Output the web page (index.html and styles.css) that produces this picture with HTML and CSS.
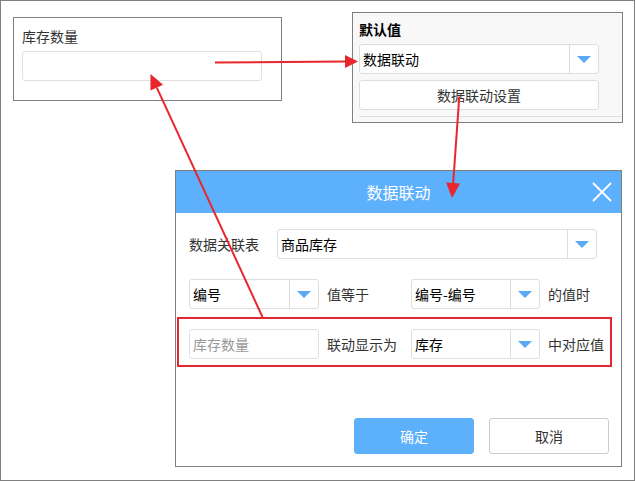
FILE: index.html
```html
<!DOCTYPE html>
<html lang="zh-CN">
<head>
<meta charset="utf-8">
<title>数据联动</title>
<link rel="stylesheet" href="styles.css">
</head>
<body>
<div class="frame">
  <div class="card card-field">
    <div class="field-label">库存数量</div>
    <div class="field-input"></div>
  </div>

  <div class="card card-default">
    <div class="default-title">默认值</div>
    <div class="select select-wide">
      <span class="select-text">数据联动</span>
      <span class="select-arrow"><i class="tri"></i></span>
    </div>
    <div class="btn-setting">数据联动设置</div>
    <div class="divider"></div>
  </div>

  <div class="dialog">
    <div class="dialog-header">
      <span class="dialog-title">数据联动</span>
      <svg class="close" width="20" height="20" viewBox="0 0 20 20">
        <path d="M1 1 L19 19 M19 1 L1 19" stroke="#fff" stroke-width="1.8" fill="none"/>
      </svg>
    </div>
    <div class="dialog-body">
      <div class="row">
        <span class="lbl lbl-table">数据关联表</span>
        <div class="select sel-table">
          <span class="select-text">商品库存</span>
          <span class="select-arrow"><i class="tri"></i></span>
        </div>
      </div>
      <div class="row">
        <div class="select sel-sm">
          <span class="select-text">编号</span>
          <span class="select-arrow"><i class="tri"></i></span>
        </div>
        <span class="lbl lbl-mid">值等于</span>
        <div class="select sel-mid">
          <span class="select-text">编号-编号</span>
          <span class="select-arrow"><i class="tri"></i></span>
        </div>
        <span class="lbl lbl-end">的值时</span>
      </div>
      <div class="row">
        <div class="input-sm">库存数量</div>
        <span class="lbl lbl-mid">联动显示为</span>
        <div class="select sel-mid">
          <span class="select-text">库存</span>
          <span class="select-arrow"><i class="tri"></i></span>
        </div>
        <span class="lbl lbl-end">中对应值</span>
      </div>
    </div>
    <div class="dialog-footer">
      <button class="btn btn-primary">确定</button>
      <button class="btn">取消</button>
    </div>
  </div>

  <svg class="annotations" width="636" height="481" viewBox="0 0 636 481">
    <g stroke="#e8262d" stroke-width="2" fill="none">
      <line x1="215" y1="62.5" x2="346" y2="61.6"/>
      <line x1="459.3" y1="96.5" x2="453.1" y2="184"/>
      <line x1="262.5" y1="317" x2="156.8" y2="87.6"/>
      <rect x="178" y="318" width="433" height="48"/>
    </g>
    <g fill="#e8262d">
      <polygon points="358,61.5 345,55.1 345,68.1"/>
      <polygon points="452,198 460.1,183.5 446.1,182.5"/>
      <polygon points="150.5,74 163.1,84.7 150.4,90.6"/>
    </g>
  </svg>
</div>
</body>
</html>
```

FILE: styles.css
```css
* {
  box-sizing: border-box;
  margin: 0;
  padding: 0;
}

body {
  font-family: "Noto Sans CJK SC", "Noto Sans", sans-serif;
  font-size: 14px;
  color: #333;
  background: #fff;
}

.frame {
  position: relative;
  width: 635px;
  height: 481px;
  border: 1px solid #808080;
  background: #fff;
}

.card {
  position: absolute;
  border: 1px solid #7f7f7f;
}

.card-field {
  left: 12px;
  top: 16px;
  width: 269px;
  height: 84px;
  padding: 8px 0 0 8px;
  background: #fff;
}

.field-label {
  line-height: 20px;
  color: #333;
}

.field-input {
  margin-top: 5px;
  width: 240px;
  height: 30px;
  border: 1px solid #e0e0e0;
  border-radius: 3px;
  background: #fff;
}

.card-default {
  left: 351px;
  top: 11px;
  width: 271px;
  height: 111px;
  padding: 6px 0 0 6px;
  background: #f8f8f8;
}

.default-title {
  font-weight: bold;
  color: #000;
  line-height: 20px;
}

.select {
  display: flex;
  height: 30px;
  border: 1px solid #ddd;
  border-radius: 3px;
  background: #fff;
}

.select-text {
  flex: 1;
  min-width: 0;
  padding-left: 3px;
  line-height: 28px;
  color: #000;
  white-space: nowrap;
  overflow: hidden;
}

.select-arrow {
  width: 29px;
  border-left: 1px solid #ddd;
  display: flex;
  align-items: center;
  justify-content: center;
}

.tri {
  display: block;
  width: 0;
  height: 0;
  border-left: 7px solid transparent;
  border-right: 7px solid transparent;
  border-top: 7px solid #5aa9f5;
}

.select-wide {
  margin-top: 5px;
  width: 240px;
}

.btn-setting {
  margin-top: 6px;
  width: 240px;
  height: 30px;
  border: 1px solid #ddd;
  border-radius: 3px;
  background: #fff;
  text-align: center;
  line-height: 28px;
  color: #333;
}

.divider {
  margin-top: 6px;
  height: 1px;
  background: #ddd;
}

.dialog {
  position: absolute;
  left: 174px;
  top: 169px;
  width: 447px;
  height: 297px;
  border: 1px solid #7f7f7f;
  background: #fff;
  display: flex;
  flex-direction: column;
}

.dialog-header {
  height: 42px;
  background: #5db0fc;
  display: grid;
  grid-template-columns: 1fr auto 1fr;
  align-items: center;
}

.dialog-title {
  grid-column: 2;
  color: #fff;
  font-size: 16px;
  line-height: 22px;
}

.close {
  grid-column: 3;
  justify-self: end;
  margin-right: 9px;
  display: block;
}

.dialog-body {
  padding: 16px 0 0 13px;
  display: flex;
  flex-direction: column;
  gap: 20px;
}

.row {
  display: flex;
  align-items: center;
  height: 30px;
}

.lbl {
  color: #333;
  line-height: 20px;
  white-space: nowrap;
}

.lbl-table {
  width: 88px;
}

.sel-table {
  width: 320px;
}

.sel-sm {
  width: 130px;
}

.sel-mid {
  width: 129px;
}

.lbl-mid {
  width: 92px;
  padding-left: 8px;
}

.lbl-end {
  padding-left: 8px;
}

.input-sm {
  width: 130px;
  height: 30px;
  border: 1px solid #e0e0e0;
  border-radius: 3px;
  padding-left: 3px;
  line-height: 28px;
  color: #999;
}

.dialog-footer {
  margin-top: auto;
  display: flex;
  justify-content: flex-end;
  gap: 15px;
  padding: 0 12px 12px 0;
}

.btn {
  width: 120px;
  height: 36px;
  border: 1px solid #ccc;
  border-radius: 3px;
  background: #fff;
  font: inherit;
  color: #333;
}

.btn-primary {
  background: #5db0fc;
  border-color: #5db0fc;
  color: #fff;
}

.annotations {
  position: absolute;
  left: -1px;
  top: -1px;
  pointer-events: none;
}
```
